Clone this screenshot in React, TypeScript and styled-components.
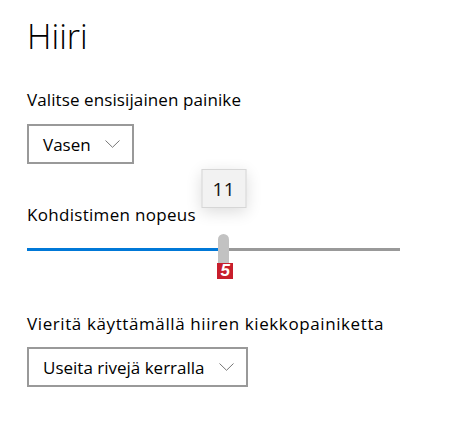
import { createGlobalStyle } from 'styled-components';
import styled from 'styled-components';

const GlobalStyle = createGlobalStyle`
  html, body {
    margin: 0;
    padding: 0;
    background: #ffffff;
  }
  body {
    font-family: 'Open Sans', 'Noto Sans', sans-serif;
    color: #000000;
  }
`;

const Page = styled.div`
  width: 461px;
  height: 428px;
  box-sizing: border-box;
  padding: 15px 0 0 27px;
  display: flex;
  flex-direction: column;
  align-items: flex-start;
`;

const Title = styled.h1`
  margin: 0;
  font-size: 34px;
  font-weight: 300;
  line-height: 42px;
  color: #000;
`;

const Label = styled.div<{ $top: number; $spacing?: number }>`
  margin-top: ${({ $top }) => $top}px;
  font-size: 17px;
  line-height: 22px;
  letter-spacing: ${({ $spacing = 0.1 }) => $spacing}px;
  color: #000;
`;

const Select = styled.div<{ $top: number }>`
  margin-top: ${({ $top }) => $top}px;
  height: 40px;
  box-sizing: border-box;
  border: 2px solid #999999;
  display: flex;
  align-items: center;
  gap: 14px;
  padding: 0 12px 0 14px;
  font-size: 17px;
  color: #000;
  background: #fff;
`;

const SliderSection = styled.div`
  margin-top: 40px;
  width: 373px;
  display: flex;
  flex-direction: column;
`;

const SliderRow = styled.div`
  position: relative;
  margin-top: 8px;
  height: 29px;
  display: flex;
  align-items: center;
`;

const Track = styled.div<{ $filled: boolean }>`
  height: 3px;
  margin-top: 2px;
  background: ${({ $filled }) => ($filled ? '#0078d7' : '#999999')};
`;

const Thumb = styled.div`
  position: absolute;
  top: 0;
  width: 11px;
  height: 29px;
  margin-left: -5px;
  background: #c2c2c2;
  border-radius: 6px 6px 0 0;
`;

const Tooltip = styled.div`
  position: absolute;
  bottom: 100%;
  left: 50%;
  margin-bottom: 26px;
  transform: translateX(-50%);
  width: 45px;
  height: 39px;
  box-sizing: border-box;
  border: 1px solid #d6d6d6;
  background: #f2f2f2;
  box-shadow: 0 4px 16px rgba(0, 0, 0, 0.14);
  display: flex;
  align-items: center;
  justify-content: center;
  font-size: 19px;
  letter-spacing: 0.5px;
  color: #111;
`;

const Badge = styled.div`
  position: absolute;
  top: 100%;
  left: -1px;
  width: 16px;
  height: 16px;
  background: #c81e2c;
  color: #fff;
  font-family: 'Liberation Sans', Arial, sans-serif;
  font-weight: 700;
  font-style: italic;
  font-size: 17px;
  line-height: 16px;
  text-align: center;
`;

function Chevron() {
  return (
    <svg width="15" height="8" viewBox="0 0 15 8">
      <polyline points="0.5,0.5 7.5,7.3 14.5,0.5" fill="none" stroke="#777" strokeWidth="1" />
    </svg>
  );
}

function Slider({ value, min, max }: { value: number; min: number; max: number }) {
  const pct = ((value - min) / (max - min)) * 100;
  return (
    <SliderRow>
      <Track $filled style={{ width: `${pct}%` }} />
      <Track $filled={false} style={{ flex: 1 }} />
      <Thumb style={{ left: `${pct}%` }}>
        <Tooltip>{value}</Tooltip>
        <Badge>5</Badge>
      </Thumb>
    </SliderRow>
  );
}

export default function App() {
  return (
    <>
      <GlobalStyle />
      <Page>
        <Title>Hiiri</Title>
        <Label $top={32}>Valitse ensisijainen painike</Label>
        <Select $top={13}>
          Vasen
          <Chevron />
        </Select>
        <SliderSection>
          <Label $top={0} $spacing={0.3}>
            Kohdistimen nopeus
          </Label>
          <Slider value={11} min={1} max={20} />
        </SliderSection>
        <Label $top={50} $spacing={0.6}>
          Vieritä käyttämällä hiiren kiekkopainiketta
        </Label>
        <Select $top={12}>
          Useita rivejä kerralla
          <Chevron />
        </Select>
      </Page>
    </>
  );
}
